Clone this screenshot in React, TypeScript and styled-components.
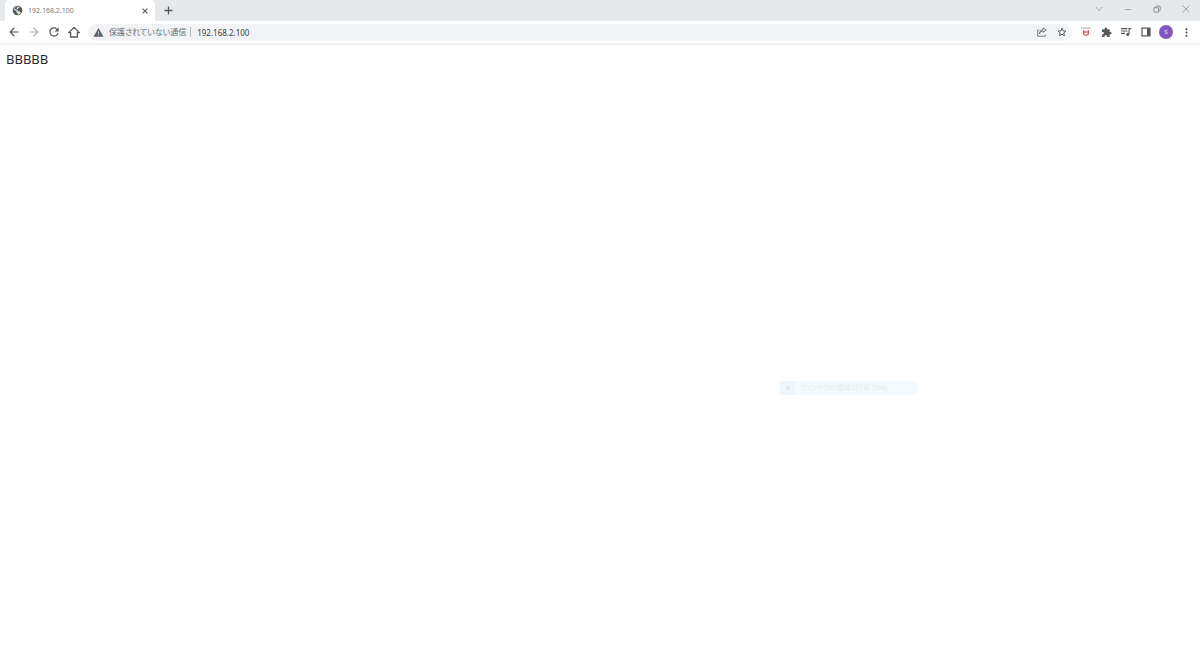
import React from "react";
import styled, { createGlobalStyle } from "styled-components";
import {
  MdArrowBack,
  MdArrowForward,
  MdExtension,
  MdMoreVert,
  MdRefresh,
  MdWarning,
} from "react-icons/md";

const GlobalStyle = createGlobalStyle`
  * { box-sizing: border-box; }
  body {
    margin: 0;
    background: #fff;
    font-family: "Noto Sans", "Noto Sans CJK JP", sans-serif;
  }
  #root { min-height: 100vh; }
`;

const Browser = styled.div`
  display: flex;
  flex-direction: column;
  min-height: 100vh;
`;

const TabStrip = styled.header`
  display: flex;
  align-items: stretch;
  height: 21px;
  padding-left: 5px;
  background: #e5e9ec;
`;

const Tab = styled.div`
  display: flex;
  align-items: center;
  gap: 5px;
  width: 150px;
  padding: 0 5px 0 7px;
  border-radius: 5px 5px 0 0;
  background: #fff;
  color: #5f6368;
`;

const TabTitle = styled.span`
  flex: 1;
  font-size: 7px;
  line-height: 10px;
  color: #7c8084;
`;

const IconButton = styled.button<{ $size?: number; $color?: string }>`
  display: flex;
  align-items: center;
  justify-content: center;
  width: ${(p) => p.$size ?? 20}px;
  height: ${(p) => Math.min(p.$size ?? 20, 20)}px;
  padding: 0;
  border: 0;
  background: none;
  color: ${(p) => p.$color ?? "#55595e"};
`;

const NewTab = styled(IconButton)`
  height: 21px;
  margin-left: 3px;
`;

const WindowControls = styled.div`
  display: flex;
  margin: -1px 0 0 auto;
`;

const Toolbar = styled.nav`
  display: flex;
  align-items: center;
  height: 24px;
  padding: 0 4px;
  border-bottom: 2px solid #f0f1f2;
`;

const AddressBar = styled.form`
  display: flex;
  flex: 1;
  align-items: center;
  height: 17px;
  margin: 0 4px;
  padding-left: 5px;
  border-radius: 9px;
  background: #f1f3f4;
  color: #5f6368;
`;

const Security = styled.span`
  margin: 0 4px 0 5px;
  font-size: 8px;
  font-feature-settings: "palt";
  line-height: 16px;
  white-space: nowrap;
  color: #6d7175;
`;

const Divider = styled.span`
  width: 1px;
  height: 10px;
  background: #b9bcbf;
`;

const Address = styled.input`
  flex: 1;
  min-width: 0;
  height: 16px;
  padding: 0 0 0 6px;
  border: 0;
  outline: 0;
  background: none;
  font-family: inherit;
  font-size: 8px;
  color: #3c4043;
`;

const Avatar = styled.span`
  display: flex;
  align-items: center;
  justify-content: center;
  width: 14px;
  height: 14px;
  border-radius: 50%;
  background: #7e57c2;
  color: #e8e0f4;
  font-size: 7px;
  line-height: 14px;
`;

const Page = styled.main`
  position: relative;
  flex: 1;
  padding: 5px 6px;
  font-size: 13px;
  line-height: 19px;
  color: #2b2b2b;
`;

const FadingMenuItem = styled.div`
  position: absolute;
  top: 336px;
  left: 65%;
  display: flex;
  align-items: center;
  width: 138px;
  height: 14px;
  border-radius: 2px;
  background: #f4fafe;
  color: #e6eaed;
  font-size: 7px;
  font-feature-settings: "palt";
  line-height: 14px;
  white-space: nowrap;
`;

const MenuMark = styled.span`
  display: flex;
  align-items: center;
  justify-content: center;
  width: 15px;
  height: 14px;
  margin-right: 5px;
  background: #eef6fe;
`;

const Line = styled.svg`
  fill: none;
  stroke: currentColor;
`;

const App: React.FC = () => (
  <Browser>
    <GlobalStyle />
    <TabStrip>
      <Tab>
        <svg width="11" height="11" viewBox="0 0 11 11" aria-hidden="true">
          <circle cx="5.5" cy="5.5" r="4.8" fill="#54585d" />
          <path d="M5.2 1.6l2.4.3q-.2 1.2-1.4 1.3l-.4 1.1H4.3l-.4.9h1.9q.8.2.8 1.3h1l1.4.8Q7.9 9.3 5.9 9.8V8.6l-1.2-.8V6.7L1.6 4.3Q2.5 2.1 5.2 1.6z" fill="#fff" opacity=".85" />
          <path d="M4.6 1.9l1.1.4-.8 1.3-1.6.9-1-.8z" fill="#54585d" />
        </svg>
        <TabTitle>192.168.2.100</TabTitle>
        <IconButton $size={10} aria-label="閉じる">
          <Line width="6" height="6" viewBox="0 0 6 6" strokeWidth="1.1">
            <path d="M.6.6l4.8 4.8M5.4.6L.6 5.4" />
          </Line>
        </IconButton>
      </Tab>
      <NewTab aria-label="新しいタブ">
        <Line width="9" height="9" viewBox="0 0 9 9" strokeWidth="1.3">
          <path d="M4.5 .5v8M.5 4.5h8" />
        </Line>
      </NewTab>
      <WindowControls>
        <IconButton $size={29} $color="#a4a7aa" aria-label="タブを検索">
          <Line width="8" height="8" viewBox="0 0 8 8">
            <path d="M.8 2L4 5.6 7.2 2" />
          </Line>
        </IconButton>
        <IconButton $size={29} $color="#a4a7aa" aria-label="最小化">
          <Line width="8" height="8" viewBox="0 0 8 8">
            <path d="M1 4.5h6" />
          </Line>
        </IconButton>
        <IconButton $size={29} $color="#85888b" aria-label="元に戻す">
          <Line width="8" height="8" viewBox="0 0 8 8" strokeWidth=".9">
            <path d="M1 2.7h4.5v4.5H1zM2.5 2.7V1.7q0-.7.7-.7h3.2q.8 0 .8.8v3.2q0 .7-.7.7h-1" />
          </Line>
        </IconButton>
        <IconButton $size={29} $color="#a4a7aa" aria-label="ウィンドウを閉じる">
          <Line width="8" height="8" viewBox="0 0 8 8">
            <path d="M.7.7l6.6 6.6M7.3.7L.7 7.3" />
          </Line>
        </IconButton>
      </WindowControls>
    </TabStrip>
    <Toolbar>
      <IconButton aria-label="戻る">
        <MdArrowBack size={14} />
      </IconButton>
      <IconButton $color="#b5b8bb" aria-label="進む">
        <MdArrowForward size={14} />
      </IconButton>
      <IconButton aria-label="再読み込み">
        <MdRefresh size={14} />
      </IconButton>
      <IconButton aria-label="ホーム">
        <Line width="12" height="12" viewBox="0 0 12 12" strokeWidth="1.3">
          <path d="M.7 6.6H2.6v4.4h6.8V6.6h1.9L6 1.4z" />
        </Line>
      </IconButton>
      <AddressBar onSubmit={(e) => e.preventDefault()}>
        <MdWarning size={11} />
        <Security>保護されていない通信</Security>
        <Divider />
        <Address aria-label="アドレス" defaultValue="192.168.2.100" />
        <IconButton type="button" aria-label="共有">
          <Line width="10" height="10" viewBox="0 0 10 10" strokeWidth=".8">
            <path d="M1.8 3H.7v6.2h7.6V7.6M2.4 6.8Q3 4 6.2 3.8V5.4L9.2 3 6.2.9v1.5Q2.6 2.7 2.4 6.8z" />
          </Line>
        </IconButton>
        <IconButton type="button" aria-label="ブックマーク">
          <Line width="10" height="10" viewBox="0 0 10 10" strokeWidth="1">
            <path d="M5 1.2l1.1 2.6 2.8.3-2.1 1.8.6 2.8L5 7.2 2.6 8.7l.6-2.8-2.1-1.8 2.8-.3z" />
          </Line>
        </IconButton>
      </AddressBar>
      <IconButton aria-label="拡張機能 u">
        <Line width="10" height="10" viewBox="0 0 10 10">
          <path d="M0 1h10" stroke="#a5a0a0" />
          <path d="M2.7 3v3.8q0 1.2 1.2 1.2h2.2q1.2 0 1.2-1.2V3M2.7 5h4.6" stroke="#d43a40" strokeWidth="1.1" />
        </Line>
      </IconButton>
      <IconButton aria-label="拡張機能">
        <MdExtension size={11} />
      </IconButton>
      <IconButton aria-label="メディア">
        <Line width="12" height="10" viewBox="0 0 12 10" strokeWidth="1.1">
          <path d="M1 1.6h6.5M1 4h6.5M1 6.4h4M9 7.5V1.6h2.4" />
          <circle cx="7.7" cy="7.5" r="1.2" fill="currentColor" strokeWidth=".6" />
        </Line>
      </IconButton>
      <IconButton aria-label="サイドパネル">
        <Line width="10" height="10" viewBox="0 0 10 10" strokeWidth="1.2">
          <path d="M1 1.2h8v7.6H1z" />
          <path d="M6 1h3v8H6z" fill="currentColor" stroke="none" />
        </Line>
      </IconButton>
      <IconButton aria-label="プロフィール">
        <Avatar>s</Avatar>
      </IconButton>
      <IconButton aria-label="メニュー">
        <MdMoreVert size={13} />
      </IconButton>
    </Toolbar>
    <Page>
      BBBBB
      <FadingMenuItem>
        <MenuMark>
          <svg width="6" height="6" viewBox="0 0 6 6">
            <circle cx="3" cy="3" r="2" fill="#e3e8f0" />
          </svg>
        </MenuMark>
        ウィンドウの領域切り取り(W)
      </FadingMenuItem>
    </Page>
  </Browser>
);

export default App;
